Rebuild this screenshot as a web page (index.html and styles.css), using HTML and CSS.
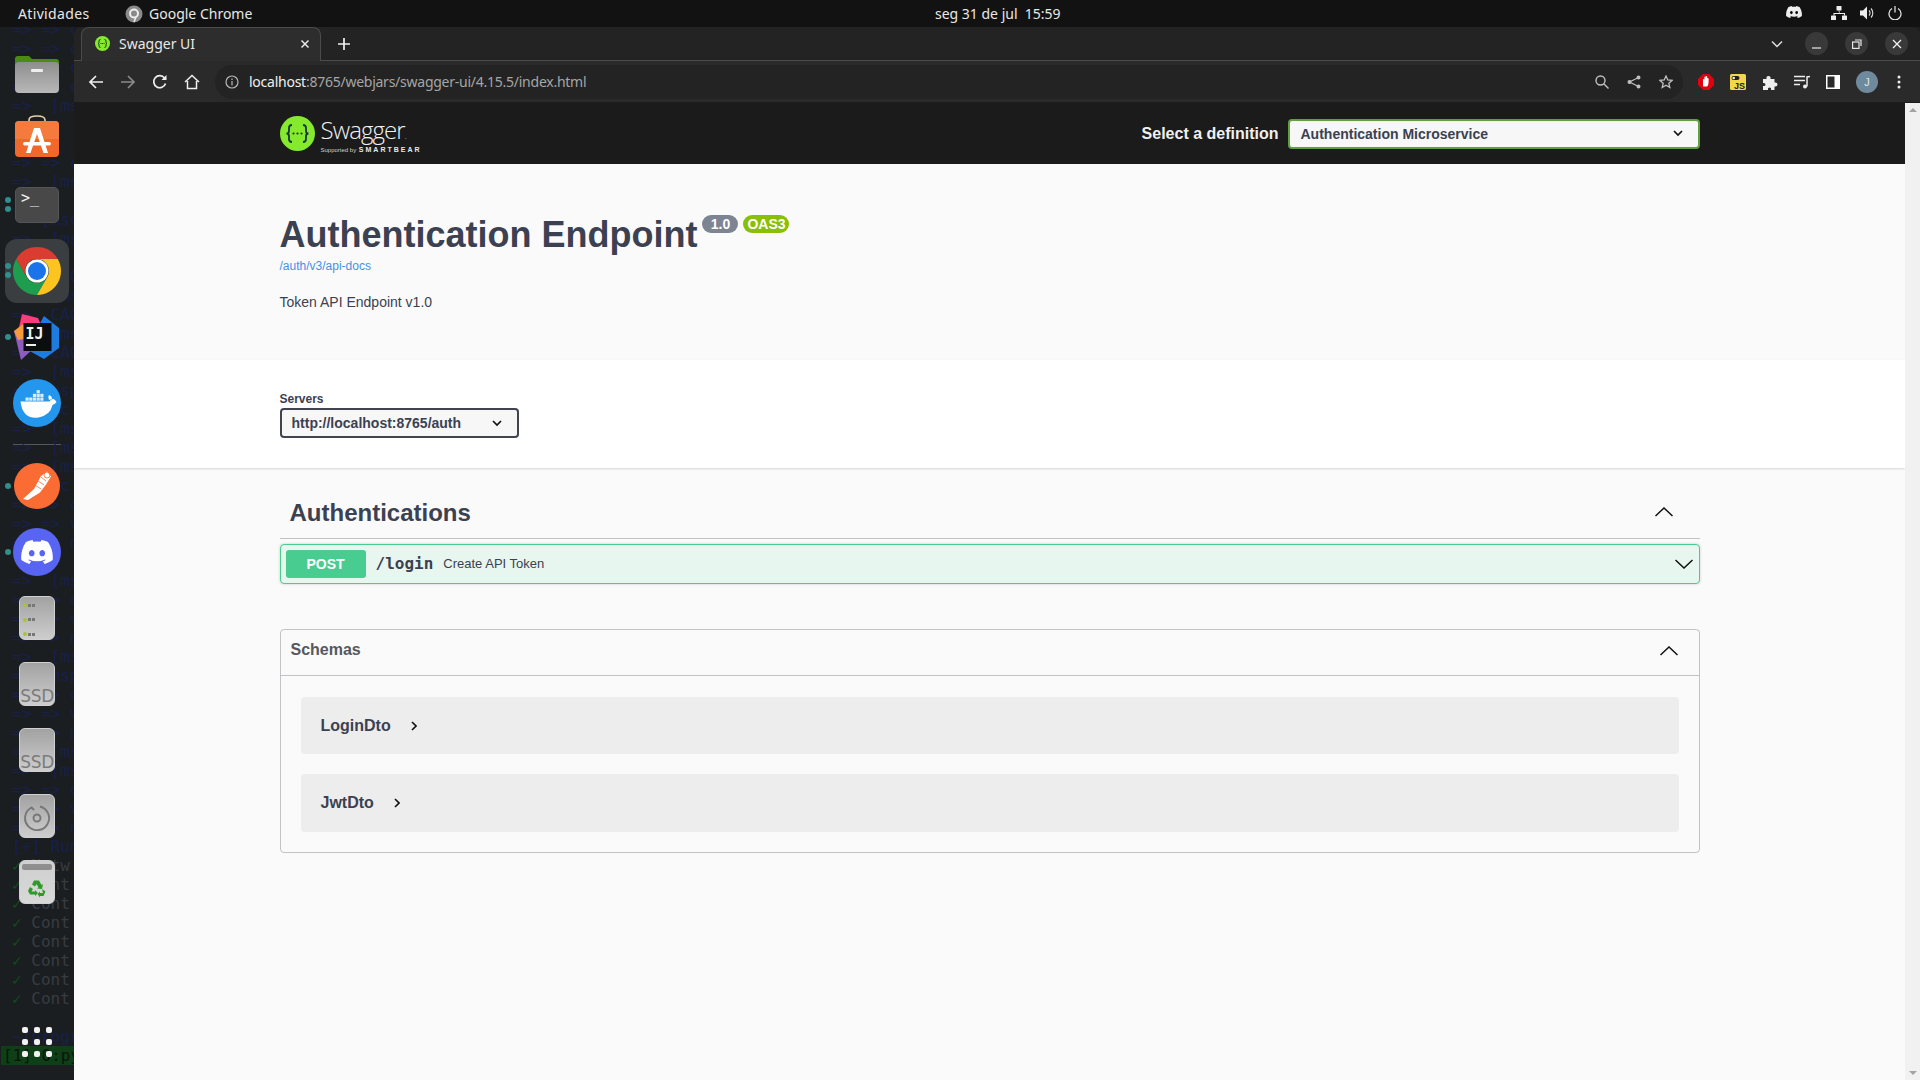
FILE: index.html
```html
<!DOCTYPE html>
<html>
<head>
    <title>Swagger UI</title>
    <link rel="stylesheet" href="styles.css">
</head>
<body>
    <svg class="defs" width="0" height="0">
        <symbol id="discord" viewBox="0 0 127.14 96.36">
            <path d="M107.7,8.07A105.15,105.15,0,0,0,81.47,0a72.06,72.06,0,0,0-3.36,6.83A97.68,97.68,0,0,0,49,6.83,72.37,72.37,0,0,0,45.64,0,105.89,105.89,0,0,0,19.39,8.09C2.79,32.65-1.71,56.6.54,80.21h0A105.73,105.73,0,0,0,32.71,96.36,77.7,77.7,0,0,0,39.6,85.25a68.42,68.42,0,0,1-10.85-5.18c.91-.66,1.8-1.34,2.66-2a75.57,75.57,0,0,0,64.32,0c.87.71,1.76,1.39,2.66,2a68.68,68.68,0,0,1-10.87,5.19,77,77,0,0,0,6.89,11.1A105.25,105.25,0,0,0,126.6,80.22h0C129.24,52.84,122.09,29.11,107.7,8.07ZM42.45,65.69C36.18,65.69,31,60,31,53s5-12.74,11.43-12.74S54,46,53.89,53,48.84,65.69,42.45,65.69Zm42.24,0C78.41,65.69,73.25,60,73.25,53s5-12.74,11.44-12.74S96.23,46,96.12,53,91.08,65.69,84.69,65.69Z"/>
        </symbol>
    </svg>

    <div class="topbar">
        <span class="activities">Atividades</span>
        <svg class="app-icon" width="18" height="18" viewBox="0 0 18 18"><circle cx="9" cy="9" r="8.5" fill="#8a8a8a"/><circle cx="9" cy="8.5" r="4" fill="none" stroke="#eee" stroke-width="2"/><path d="M11 12l-2 5" stroke="#eee" stroke-width="1.5"/></svg>
        <span class="app-name">Google Chrome</span>
        <span class="clock">seg 31 de jul&nbsp; 15:59</span>
        <div class="tray">
            <svg class="tray-discord" width="16" height="12"><use href="#discord" fill="#eee"/></svg>
            <svg class="tray-net" width="16" height="14" viewBox="0 0 16 14" fill="#eee"><rect x="5.5" y="0" width="5" height="4.5" rx=".6"/><rect x="0" y="9.5" width="5" height="4.5" rx=".6"/><rect x="11" y="9.5" width="5" height="4.5" rx=".6"/><path d="M7.5 4.5h1v2.5h5.5v2.5h-1v-1.5h-9.5v1.5h-1v-2.5h5.5z"/></svg>
            <svg class="tray-vol" width="15" height="14" viewBox="0 0 15 14"><path d="M0 4.5h3l4-4v13l-4-4h-3z" fill="#eee"/><path d="M9 4.5a3.5 3.5 0 0 1 0 5M11 2.5a6.5 6.5 0 0 1 0 9" fill="none" stroke="#ddd" stroke-width="1.1"/></svg>
            <svg class="tray-power" width="14" height="14" viewBox="0 0 14 14" fill="none" stroke="#eee" stroke-width="1.2"><path d="M4 2.6a6 6 0 1 0 6 0"/><path d="M7 0v6.5"/></svg>
        </div>
    </div>

    <div class="desktop">
        <div class="dock">
            <pre class="term"><span class="t">=&gt; =&gt; c
=&gt; =&gt; c
   =&gt; c
=&gt; =&gt; c
=&gt;  [msa

=&gt; sc
=&gt; =&gt; c
=&gt;  [msp

   [msc
=&gt;  [ms
=&gt;  ms
=&gt;  CACH
=&gt;  [ms
=&gt;  CACH
=&gt;  [msp
=&gt;  CACH
=&gt;  [ms
=&gt;  msp
=&gt;  sc
=&gt;  [ms
=&gt;  [ms
=&gt;  [ms
    sc
=&gt; =&gt; c
=&gt; =&gt; v
=&gt; =&gt; n
  sa
=&gt;  [ms
=&gt; =&gt; c
=&gt; =&gt; v
=&gt; =&gt; n
=&gt;  [msp
=&gt;  msp
=&gt; =&gt; c
=&gt; =&gt; v
=&gt; =&gt; n
=&gt;  [msc
=&gt;  [ms
=&gt; =&gt; c
=&gt; =&gt; v
=&gt; =&gt; n
[+] Runn</span>
<span class="t-ok">✓</span> <span class="t-dim">Netw</span>
<span class="t-ok">✓</span> <span class="t-dim">Cont</span>
<span class="t-ok">✓</span> <span class="t-dim">Cont</span>
<span class="t-ok">✓</span> <span class="t-dim">Cont</span>
<span class="t-ok">✓</span> <span class="t-dim">Cont</span>
<span class="t-ok">✓</span> <span class="t-dim">Cont</span>
<span class="t-ok">✓</span> <span class="t-dim">Cont</span>
<span class="t-ok">✓</span> <span class="t-dim">Cont</span>

<span class="t">~/progra</span>
<span class="t-status">[1] 0:py</span></pre>

            <div class="dock-item">
                <svg width="44" height="40" viewBox="0 0 44 40"><path d="M0 6q0-3 3-3h11l3 3h24q3 0 3 3v10h-44z" fill="#4c8b12"/><rect y="9" width="44" height="31" rx="4" fill="url(#gFile)"/><rect x="16" y="16" width="12" height="3" rx="1" fill="#eee"/><defs><linearGradient id="gFile" x2="0" y2="1"><stop offset="0" stop-color="#8e8e8e"/><stop offset="1" stop-color="#b8b8b8"/></linearGradient></defs></svg>
            </div>
            <div class="dock-item">
                <svg class="bag" width="44" height="42" viewBox="0 0 44 42"><path d="M14 8v-3q0-4 8-4t8 4v3" fill="none" stroke="#e8cfa8" stroke-width="1.6"/><rect y="6" width="44" height="36" rx="4" fill="#f2672a"/><path d="M0 24V10q0-4 4-4h36q4 0 4 4v14z" fill="#f57a3d"/><path d="M19 13h6l8 25h-4.500L22 19l-6.500 19H11z" fill="#fff"/><rect x="8" y="27" width="28" height="3.400" rx="1.700" fill="#fff"/></svg>
            </div>
            <div class="dock-item">
                <span class="run run-2"></span>
                <div class="tile-term">&gt;_</div>
            </div>
            <div class="dock-item dock-active">
                <span class="run run-2"></span>
                <svg width="48" height="48" viewBox="0 0 48 48"><path d="M24 0A24 24 0 0 1 44.780 12H24A12 12 0 0 0 13.600 30L3.220 12A24 24 0 0 1 24 0z" fill="#db3c31"/><path d="M3.220 12L13.600 30A12 12 0 0 0 34.400 30L24 48A24 24 0 0 1 3.220 12z" fill="#1f9d4f"/><path d="M44.780 12A24 24 0 0 1 24 48L34.400 30A12 12 0 0 0 24 12H44.780z" fill="#fcc41f"/><circle cx="24" cy="24" r="11.500" fill="#fff"/><circle cx="24" cy="24" r="9" fill="#1a73e8"/></svg>
            </div>
            <div class="dock-item">
                <span class="run"></span>
                <svg width="46" height="46" viewBox="0 0 46 46"><path d="M8 0l16 4 6 14-16 8-10-8z" fill="#fb3d7e"/><path d="M0 17l14-5 6 22-13 12z" fill="#8d5cc0"/><path d="M0 17l9-7 5 14-10 2z" fill="#f79a3c"/><path d="M30 2l15 12v20l-15 11-18-10z" fill="#1e7be0"/><rect x="9.500" y="9" width="28" height="28" fill="#0c0d10"/><rect x="12" y="30" width="10" height="2" fill="#eee"/><text class="ij" x="11.500" y="25">IJ</text></svg>
            </div>
            <div class="dock-item">
                <svg width="48" height="48" viewBox="0 0 48 48"><circle cx="24" cy="24" r="24" fill="#2396ed"/><path d="M7.500 22.500h29q1.500-3 4-2.500 2 1 3 3-1 2-4 3-2 10-14 12.500-16 2-18-16z" fill="#fff"/><path d="M36 21q-1.500-3 0-5 3 1 3 4z" fill="#fff"/><g fill="#d8ecfc"><rect x="12.500" y="18.500" width="3.200" height="3.200"/><rect x="16.200" y="18.500" width="3.200" height="3.200"/><rect x="19.900" y="18.500" width="3.200" height="3.200"/><rect x="23.600" y="18.500" width="3.200" height="3.200"/><rect x="27.300" y="18.500" width="3.200" height="3.200"/><rect x="19.900" y="14.800" width="3.200" height="3.200"/><rect x="23.600" y="14.800" width="3.200" height="3.200"/><rect x="27.300" y="14.800" width="3.200" height="3.200"/><rect x="23.600" y="11.100" width="3.200" height="3.200"/></g></svg>
            </div>
            <div class="dock-sep"></div>
            <div class="dock-item">
                <span class="run"></span>
                <svg width="46" height="46" viewBox="0 0 46 46"><circle cx="23" cy="23" r="23" fill="#fb6b34"/><path d="M9 36l11-10 7-13 6-4.500 4 5-5 8-6 8-12 7.500z" fill="#fff"/><path d="M21 22l6 4M24 18l6 4M27 14l5 4" stroke="#fb6b34" stroke-width=".8"/><circle cx="33" cy="12" r="3" fill="none" stroke="#fb6b34" stroke-width=".8"/></svg>
            </div>
            <div class="dock-item">
                <span class="run"></span>
                <div class="disc-circle"><svg width="32" height="24"><use href="#discord" fill="#fff"/></svg></div>
            </div>
            <div class="dock-item">
                <div class="tile tile-server">
                    <div class="srv-row"><i></i><b></b><b></b></div>
                    <div class="srv-row"><i></i><b></b><b></b></div>
                    <div class="srv-row"><i></i><b></b><b></b></div>
                </div>
            </div>
            <div class="dock-item"><div class="tile tile-ssd">SSD</div></div>
            <div class="dock-item"><div class="tile tile-ssd">SSD</div></div>
            <div class="dock-item">
                <div class="tile tile-center">
                    <svg width="28" height="28" viewBox="0 0 28 28" fill="none" stroke="#777" stroke-width="1.900"><path d="M17 2.500a12 12 0 1 1-8.500 1"/><path d="M8 3l3 3"/><circle cx="14" cy="14" r="3.500"/></svg>
                </div>
            </div>
            <div class="dock-item">
                <div class="tile tile-trash">
                    <div class="trash-lid"></div>
                    <svg width="20" height="20" viewBox="0 0 20 20" fill="#2d9a2a"><path d="M7 1.500h5l2.500 4.500 1.500-1-1 5-5-.5 1.500-1-2-3.500-1.500 2.500-3-2z"/><path d="M3 8l3 2-1.500 2.500h3.500v-1.500l3 3-3 3v-1.500h-5l-2-3.500z"/><path d="M15 10l3.500 2.500-2 4.500h-3.500v1.500l-2.500-3.500 2.500-2.500v1.500h3z"/></svg>
                </div>
            </div>
            <div class="dock-grid">
                <i></i><i></i><i></i><i></i><i></i><i></i><i></i><i></i><i></i>
            </div>
        </div>

        <div class="window">
            <div class="tabstrip">
                <div class="tab">
                    <svg class="favicon" width="15" height="15" viewBox="0 0 15 15"><circle cx="7.500" cy="7.500" r="7.500" fill="#85ea2d"/><path d="M5.500 3.500q-1.500 0-1.500 1.500v1.500q0 1-1 1 1 0 1 1v1.500q0 1.500 1.500 1.500M9.500 3.500q1.500 0 1.500 1.500v1.500q0 1 1 1-1 0-1 1v1.500q0 1.500-1.500 1.500" fill="none" stroke="#173647" stroke-width="1"/><path d="M5.500 7.500h4" stroke="#173647" stroke-width="1" stroke-dasharray="1 .6"/></svg>
                    <span class="tab-title">Swagger UI</span>
                    <svg class="tab-close" width="10" height="10" viewBox="0 0 10 10" stroke="#e8e8e8" stroke-width="1.500"><path d="M1.500 1.500l7 7M8.500 1.500l-7 7"/></svg>
                </div>
                <svg class="tab-new" width="12" height="12" viewBox="0 0 12 12" stroke="#f0f0f0" stroke-width="1.700"><path d="M6 0v12M0 6h12"/></svg>
                <svg class="tab-list" width="12" height="8" viewBox="0 0 12 8" fill="none" stroke="#e0e0e0" stroke-width="1.500"><path d="M1 1.500l5 5 5-5"/></svg>
                <div class="win-btn"><svg width="10" height="10" viewBox="0 0 10 10" stroke="#e8e8e8" stroke-width="1.200"><path d="M0 9h9"/></svg></div>
                <div class="win-btn"><svg width="10" height="10" viewBox="0 0 10 10" fill="none" stroke="#e8e8e8" stroke-width="1.200"><rect x=".6" y="3" width="6.400" height="6.400"/><path d="M3 1h6v6"/></svg></div>
                <div class="win-btn"><svg width="10" height="10" viewBox="0 0 10 10" stroke="#f0f0f0" stroke-width="1.300"><path d="M1 1l8 8M9 1l-8 8"/></svg></div>
            </div>

            <div class="toolbar">
                <svg class="nav" width="16" height="16" viewBox="0 0 16 16" fill="none" stroke="#f0f0f0" stroke-width="1.700"><path d="M15 8H2M8 2L2 8l6 6"/></svg>
                <svg class="nav" width="16" height="16" viewBox="0 0 16 16" fill="none" stroke="#8a8a8a" stroke-width="1.700"><path d="M1 8h13M8 2l6 6-6 6"/></svg>
                <svg class="nav" width="16" height="16" viewBox="0 0 16 16" fill="none" stroke="#f0f0f0" stroke-width="1.700"><path d="M13.500 9.500A6 6 0 1 1 12.500 4"/><path d="M14.500 1v5h-5z" fill="#f0f0f0" stroke="none"/></svg>
                <svg class="nav" width="16" height="16" viewBox="0 0 16 16" fill="none" stroke="#f0f0f0" stroke-width="1.500"><path d="M1 8l7-6.500L15 8M3.500 7v7.500h9V7"/></svg>
                <div class="omnibox">
                    <svg class="info-icon" width="14" height="14" viewBox="0 0 14 14" fill="none" stroke="#b8b8b8" stroke-width="1.200"><circle cx="7" cy="7" r="6"/><path d="M7 6v4.500M7 3.500v1.500"/></svg>
                    <span class="url"><b>localhost</b>:8765/webjars/swagger-ui/4.15.5/index.html</span>
                    <svg class="omni-btn" width="14" height="14" viewBox="0 0 14 14" fill="none" stroke="#c0c0c0" stroke-width="1.400"><circle cx="5.500" cy="5.500" r="4.500"/><path d="M9 9l4.500 4.500"/></svg>
                    <svg class="omni-btn" width="14" height="14" viewBox="0 0 14 14" fill="#c0c0c0" stroke="#c0c0c0" stroke-width="1.200"><path d="M11.500 2.500l-9 4.500 9 4.500" fill="none"/><circle cx="11.500" cy="2.500" r="1.400"/><circle cx="2.500" cy="7" r="1.400"/><circle cx="11.500" cy="11.500" r="1.400"/></svg>
                    <svg class="omni-btn" width="14" height="14" viewBox="0 0 14 14" fill="none" stroke="#c0c0c0" stroke-width="1.300"><path d="M7 1l1.800 4 4.200.4-3.200 2.800 1 4.300L7 10.200 3.200 12.500l1-4.300L1 5.400 5.200 5z"/></svg>
                </div>
                <div class="ext-icons">
                    <svg width="16" height="16" viewBox="0 0 16 16"><path d="M5 0h6l5 5v6l-5 5H5l-5-5V5z" fill="#e2000f"/><path d="M5 12.500V6q0-1 .7-1t.7 1V3.500q0-1 .7-1t.7 1V3q0-1 .7-1t.7 1v2q0-1 .7-1t.7 1v3q0 3-1.500 4.500z" fill="#fff"/></svg>
                    <svg width="16" height="16" viewBox="0 0 16 16"><rect width="16" height="16" rx="1.500" fill="#f2d74a"/><rect x="1.500" y="2" width="8" height="4" rx="2" fill="#222"/><circle cx="3.700" cy="4" r="1.300" fill="#eee"/><text class="js" x="4" y="14.500">JS</text></svg>
                    <svg width="16" height="16" viewBox="0 0 16 16" fill="#eee"><path d="M1 5h3.500q-.5-3 2-3t2 3h4v3.500q3-.5 3 2t-3 2V16H9q.5-2.500-1.500-2.500T6 16H1v-4q2.500.5 2.500-1.500T1 9z"/></svg>
                    <svg width="16" height="14" viewBox="0 0 16 14" fill="none" stroke="#eee" stroke-width="1.500"><path d="M0 1.500h11M0 5.500h11M0 9.500h6"/><path d="M13 11.500V2l3-.5"/><circle cx="11" cy="11.500" r="2" fill="#eee" stroke="none"/></svg>
                    <svg width="14" height="14" viewBox="0 0 14 14"><rect width="14" height="14" fill="#fff"/><rect x="1.500" y="1.500" width="7" height="11" fill="#2a2a2a"/></svg>
                    <div class="avatar">J</div>
                    <svg class="menu-dots" width="4" height="14" viewBox="0 0 4 14" fill="#eee"><circle cx="2" cy="2" r="1.500"/><circle cx="2" cy="7" r="1.500"/><circle cx="2" cy="12" r="1.500"/></svg>
                </div>
            </div>

            <div class="viewport">
                <div class="page">
                    <div class="swagger-top">
                        <div class="wrapper top-inner">
                            <div class="logo">
                                <svg width="35" height="35" viewBox="0 0 35 35"><circle cx="17.500" cy="17.500" r="17.500" fill="#85ea2d"/><path d="M12 9q-3 0-3 3v3q0 2.500-2.500 2.500 2.500 0 2.500 2.500v3q0 3 3 3M23 9q3 0 3 3v3q0 2.500 2.500 2.500-2.500 0-2.500 2.500v3q0 3-3 3" fill="none" stroke="#173647" stroke-width="1.800"/><g fill="#173647"><circle cx="13.500" cy="17.500" r="1.100"/><circle cx="17.500" cy="17.500" r="1.100"/><circle cx="21.500" cy="17.500" r="1.100"/></g></svg>
                                <div class="logo-text">
                                    <div class="logo-name">Swagger<small>.</small></div>
                                    <div class="logo-sub">Supported by <b>SMARTBEAR</b></div>
                                </div>
                            </div>
                            <label class="def-label">Select a definition</label>
                            <div class="def-select">
                                <span>Authentication Microservice</span>
                                <svg class="sel-arrow" width="10" height="7" viewBox="0 0 10 7" fill="none" stroke="#111" stroke-width="1.700"><path d="M1 1l4 4 4-4"/></svg>
                            </div>
                        </div>
                    </div>

                    <div class="wrapper info">
                        <h2 class="title">Authentication Endpoint <span class="badge badge-ver">1.0</span> <span class="badge badge-oas">OAS3</span></h2>
                        <a class="spec-link" href="#">/auth/v3/api-docs</a>
                        <p class="desc">Token API Endpoint v1.0</p>
                    </div>

                    <div class="schemes">
                        <div class="wrapper">
                            <div class="schemes-label">Servers</div>
                            <div class="server-select">
                                <span>http://localhost:8765/auth</span>
                                <svg class="sel-arrow" width="10" height="7" viewBox="0 0 10 7" fill="none" stroke="#111" stroke-width="1.700"><path d="M1 1l4 4 4-4"/></svg>
                            </div>
                        </div>
                    </div>

                    <div class="wrapper ops">
                        <h3 class="tag">
                            <span>Authentications</span>
                            <svg class="chev-tag" width="18" height="10" viewBox="0 0 18 10" fill="none" stroke="#111" stroke-width="1.500"><path d="M.5 9L9 1l8.500 8"/></svg>
                        </h3>
                        <div class="opblock">
                            <span class="method">POST</span>
                            <span class="path">/login</span>
                            <span class="summary">Create API Token</span>
                            <svg class="chev-op" width="18" height="10" viewBox="0 0 18 10" fill="none" stroke="#111" stroke-width="1.500"><path d="M.5 1L9 9l8.500-8"/></svg>
                        </div>

                        <div class="models">
                            <h4 class="models-head">
                                <span>Schemas</span>
                                <svg class="chev-models" width="18" height="10" viewBox="0 0 18 10" fill="none" stroke="#111" stroke-width="1.500"><path d="M.5 9L9 1l8.500 8"/></svg>
                            </h4>
                            <div class="models-body">
                                <div class="model"><span>LoginDto</span><svg width="6" height="10" viewBox="0 0 6 10" fill="none" stroke="#111" stroke-width="1.600"><path d="M1 1l4 4-4 4"/></svg></div>
                                <div class="model"><span>JwtDto</span><svg width="6" height="10" viewBox="0 0 6 10" fill="none" stroke="#111" stroke-width="1.600"><path d="M1 1l4 4-4 4"/></svg></div>
                            </div>
                        </div>
                    </div>
                </div>
                <div class="scrollbar">
                    <span class="sb-up"></span>
                    <span class="sb-down"></span>
                </div>
            </div>
        </div>
    </div>
</body>
</html>
```

FILE: styles.css
```css
html, body {
    margin: 0;
    height: 100%;
    overflow: hidden;
}
body {
    display: flex;
    flex-direction: column;
    font-family: "Liberation Sans", Arial, sans-serif;
    background-color: #1b1e20;
    color: #3b4151;
}
.defs {
    position: absolute;
}

/* desktop top bar */
.topbar {
    height: 27px;
    flex: none;
    display: flex;
    align-items: center;
    position: relative;
    background-color: #121212;
    color: #e8e8e8;
    font-family: "Noto Sans", sans-serif;
    font-size: 14px;
    padding-left: 18px;
}
.activities {
    width: 107px;
    letter-spacing: 0.35px;
}
.app-icon {
    margin-right: 6px;
}
.clock {
    position: absolute;
    left: 935px;
    top: 4px;
    line-height: 19px;
}
.tray {
    position: absolute;
    top: 0;
    left: 0;
    width: 100%;
    height: 27px;
}
.tray svg {
    position: absolute;
    top: 6px;
}
.tray-discord { left: 1786px; }
.tray-net { left: 1831px; }
.tray-vol { left: 1860px; }
.tray-power { left: 1888px; }

.desktop {
    flex: 1;
    display: flex;
    min-height: 0;
}

/* dock */
.dock {
    width: 74px;
    flex: none;
    display: flex;
    flex-direction: column;
    position: relative;
    padding-top: 13px;
    box-sizing: border-box;
    overflow: hidden;
}
.term {
    position: absolute;
    left: 12px;
    top: -7px;
    margin: 0;
    width: 62px;
    font-family: "DejaVu Sans Mono", monospace;
    font-size: 16px;
    line-height: 19px;
    color: #18204a;
}
.t-ok { color: #114a1c; }
.t-dim { color: #383c40; }
.t-status {
    display: inline-block;
    width: 73px;
    margin-left: -11px;
    padding-left: 2px;
    box-sizing: border-box;
    background-color: #0e3f16;
    color: #0a160c;
}
.dock-item {
    height: 66px;
    flex: none;
    display: flex;
    align-items: center;
    justify-content: center;
    position: relative;
}
.dock-active::before {
    content: "";
    position: absolute;
    left: 5px;
    top: 1px;
    width: 64px;
    height: 64px;
    border-radius: 12px;
    background-color: #3b3e40;
}
.dock-item > * {
    position: relative;
}
.bag {
    margin-top: -7px;
}
.run {
    position: absolute !important;
    left: 5px;
    top: 30px;
    width: 6px;
    height: 6px;
    border-radius: 50%;
    background-color: #2f8f8c;
}
.run-2 {
    top: 25px;
    box-shadow: 0 9px 0 #2f8f8c;
}
.dock-sep {
    flex: none;
    height: 1px;
    margin: 8px 13px;
    background-color: #55585a;
}
.tile-term {
    width: 44px;
    height: 36px;
    border-radius: 5px;
    background-color: #484848;
    border: 1px solid #555;
    box-sizing: border-box;
    padding-left: 5px;
    color: #f2f2f2;
    font-family: "DejaVu Sans Mono", monospace;
    font-size: 15px;
    line-height: 20px;
}
.disc-circle {
    width: 48px;
    height: 48px;
    border-radius: 50%;
    background-color: #5865f2;
    display: flex;
    align-items: center;
    justify-content: center;
}
.tile {
    width: 36px;
    height: 44px;
    box-sizing: border-box;
    border-radius: 6px;
    border: 1px solid #d0d0d0;
    background: linear-gradient(#a2a2a2, #cdcdcd);
}
.tile-server {
    padding: 6px 3px;
    display: flex;
    flex-direction: column;
    gap: 10.5px;
}
.srv-row {
    display: flex;
    gap: 1px;
    height: 4px;
    align-items: center;
}
.srv-row i {
    width: 4px;
    height: 4px;
    border-radius: 50%;
    background-color: #a8c23c;
}
.srv-row b {
    width: 3px;
    height: 3px;
    background-color: #777;
}
.tile-ssd {
    font-size: 17px;
    color: #7b7b7b;
    text-align: right;
    padding: 23px 0 0;
    line-height: 20px;
    white-space: nowrap;
    font-family: "DejaVu Sans", sans-serif;
    letter-spacing: -0.3px;
}
.tile-center {
    display: flex;
    justify-content: center;
    padding-top: 9px;
}
.tile-trash {
    background: linear-gradient(#cfcfcf, #d8d8d8);
    display: flex;
    flex-direction: column;
    align-items: center;
    padding-top: 3px;
    gap: 9px;
}
.trash-lid {
    width: 30px;
    height: 6px;
    border-radius: 2px;
    background-color: #8f8f8f;
}
.dock-grid {
    position: absolute;
    left: 22px;
    top: 1000px;
    display: grid;
    grid-template-columns: repeat(3, 6px);
    gap: 6px;
}
.dock-grid i {
    width: 6px;
    height: 6px;
    border-radius: 2px;
    background-color: #f2f2f2;
}
.ij {
    font-family: "DejaVu Sans Mono", monospace;
    font-weight: bold;
    font-size: 15px;
    fill: #f2f2f2;
}
.js {
    font-family: "Liberation Sans", sans-serif;
    font-weight: bold;
    font-size: 9px;
    fill: #222;
}

/* browser window */
.window {
    flex: 1;
    min-width: 0;
    display: flex;
    flex-direction: column;
}
.tabstrip {
    height: 33px;
    flex: none;
    box-sizing: content-box;
    display: flex;
    align-items: center;
    background-color: #232323;
    border-bottom: 1px solid #4b4b4b;
    border-radius: 8px 8px 0 0;
    padding-left: 7px;
    color: #e8e8e8;
}
.tab {
    width: 240px;
    height: 34px;
    box-sizing: border-box;
    margin-bottom: -1px;
    display: flex;
    align-items: center;
    background-color: #2d2d2d;
    border: 1px solid #4b4b4b;
    border-bottom: none;
    border-radius: 8px 8px 0 0;
    padding: 0 0 2px 13px;
    font-family: "Noto Sans", sans-serif;
    font-size: 14px;
}
.favicon {
    margin-right: 9px;
}
.tab-title {
    flex: 1;
}
.tab-close {
    margin-right: 10px;
}
.tab-new {
    margin-left: 17px;
}
.tab-list {
    margin-left: auto;
    margin-right: 22px;
}
.win-btn {
    width: 23px;
    height: 23px;
    border-radius: 50%;
    background-color: #393939;
    display: flex;
    align-items: center;
    justify-content: center;
    margin-right: 17px;
}
.win-btn:last-child {
    margin-right: 12px;
}
.toolbar {
    height: 41px;
    flex: none;
    display: flex;
    align-items: center;
    background-color: #2a2a2a;
    border-bottom: 1px solid #1d1d1d;
    padding-left: 14px;
}
.nav {
    margin-right: 16px;
    flex: none;
}
.nav:nth-of-type(4) {
    margin-right: 15px;
}
.omnibox {
    width: 1468px;
    height: 34px;
    flex: none;
    display: flex;
    align-items: center;
    background-color: #232323;
    border-radius: 17px;
    padding: 0 10px;
    box-sizing: border-box;
}
.info-icon {
    margin-right: 10px;
    flex: none;
}
.url {
    flex: 1;
    font-family: "Noto Sans", sans-serif;
    font-size: 14px;
    color: #a6a6a6;
    letter-spacing: -0.25px;
}
.url b {
    font-weight: normal;
    color: #f0f0f0;
}
.omni-btn {
    margin-left: 18px;
    flex: none;
}
.ext-icons {
    flex: 1;
    display: flex;
    align-items: center;
    padding-left: 15px;
    gap: 16px;
}
.avatar {
    width: 22px;
    height: 22px;
    border-radius: 50%;
    background-color: #6e8a9c;
    color: #dfe6ea;
    font-size: 11px;
    line-height: 22px;
    text-align: center;
}
.menu-dots {
    margin-left: 3px;
}

/* page inside the window */
.viewport {
    flex: 1;
    display: flex;
    min-height: 0;
}
.page {
    flex: 1;
    min-width: 0;
    background-color: #fafafa;
}
.scrollbar {
    width: 15px;
    flex: none;
    display: flex;
    flex-direction: column;
    justify-content: space-between;
    align-items: center;
    background-color: #f1f1f1;
    padding: 5px 0;
    box-sizing: border-box;
}
.sb-up {
    border-left: 4px solid transparent;
    border-right: 4px solid transparent;
    border-bottom: 4px solid #a3a3a3;
}
.sb-down {
    border-left: 4px solid transparent;
    border-right: 4px solid transparent;
    border-top: 4px solid #a3a3a3;
}
.wrapper {
    box-sizing: border-box;
    max-width: 1460px;
    margin: 0 auto;
    padding: 0 20px;
}

.swagger-top {
    height: 61px;
    background-color: #1b1b1b;
    display: flex;
    align-items: center;
}
.top-inner {
    flex: 1;
    display: flex;
    align-items: center;
}
.logo {
    display: flex;
    align-items: center;
    margin-right: auto;
    color: #f2f2f2;
}
.logo-text {
    margin-left: 6px;
    margin-top: 4px;
}
.logo-name {
    font-family: "Open Sans", sans-serif;
    font-weight: 300;
    font-size: 24px;
    line-height: 26px;
    letter-spacing: -0.9px;
    margin-bottom: -3px;
}
.logo-name small {
    font-size: 8px;
}
.logo-sub {
    font-size: 6px;
    line-height: 8px;
    color: #cfcfcf;
    white-space: nowrap;
}
.logo-sub b {
    font-size: 7px;
    letter-spacing: 2px;
    color: #e8e8e8;
    margin-left: 1px;
}
.def-label {
    font-size: 16px;
    font-weight: bold;
    color: #f0f0f0;
    margin-right: 9px;
}
.def-select {
    width: 412px;
    height: 30px;
    box-sizing: border-box;
    border: 2px solid #62a03f;
    border-radius: 4px;
    background-color: #f7f7f7;
    padding: 0 10px 0 11px;
    display: flex;
    align-items: center;
    justify-content: space-between;
    font-size: 14px;
    font-weight: bold;
    color: #3b4151;
}
.sel-arrow {
    margin-right: 5px;
}

.info {
    padding-top: 48px;
    height: 196px;
}
.title {
    margin: 0;
    font-size: 36px;
    line-height: 45px;
    font-weight: bold;
    color: #3b4151;
}
.badge {
    display: inline-block;
    vertical-align: 18px;
    margin-left: -5px;
    margin-right: 0;
    height: 18px;
    line-height: 18px;
    padding: 0 4px;
    border-radius: 57px;
    color: #fff;
    font-size: 14px;
    font-weight: bold;
}
.badge-ver {
    width: 36px;
    box-sizing: border-box;
    text-align: center;
    background-color: #7d8492;
}
.badge-oas {
    width: 46px;
    box-sizing: border-box;
    text-align: center;
    padding: 0;
    background-color: #89bf04;
}
.spec-link {
    display: block;
    margin-top: 2px;
    font-size: 12px;
    line-height: 15px;
    color: #4990e2;
    text-decoration: none;
}
.desc {
    margin: 19px 0 0;
    font-size: 14px;
    line-height: 18px;
}

.schemes {
    height: 108px;
    box-sizing: border-box;
    padding-top: 31px;
    background-color: #fff;
    box-shadow: 0 1px 2px rgba(0, 0, 0, 0.15);
}
.schemes-label {
    font-size: 12px;
    font-weight: bold;
    line-height: 17px;
}
.server-select {
    width: 239px;
    height: 30px;
    box-sizing: border-box;
    border: 2px solid #41444e;
    border-radius: 4px;
    background-color: #f7f7f7;
    padding: 0 10px;
    display: flex;
    align-items: center;
    justify-content: space-between;
    font-size: 14px;
    font-weight: bold;
}
.server-select .sel-arrow {
    margin-right: 5px;
}

.ops {
    padding-top: 20px;
}
.tag {
    margin: 0 0 5px;
    height: 51px;
    box-sizing: border-box;
    display: flex;
    align-items: center;
    justify-content: space-between;
    padding: 0 27px 1px 10px;
    border-bottom: 1px solid rgba(59, 65, 81, 0.3);
    font-size: 24px;
    font-weight: bold;
}
.chev-tag {
    margin-top: -1px;
}
.opblock {
    height: 40px;
    box-sizing: border-box;
    display: flex;
    align-items: center;
    padding: 0 6px 0 5px;
    border: 1px solid #49cc90;
    border-radius: 4px;
    background-color: #e8f6f0;
    box-shadow: 0 0 3px rgba(0, 0, 0, 0.19);
}
.method {
    width: 80px;
    height: 28px;
    line-height: 28px;
    text-align: center;
    border-radius: 3px;
    background-color: #49cc90;
    color: #fff;
    font-size: 14px;
    font-weight: bold;
}
.path {
    margin: -2px 0 0 10px;
    font-family: "DejaVu Sans Mono", monospace;
    font-size: 16px;
    font-weight: bold;
}
.summary {
    margin: -2px 0 0 10px;
    font-size: 13px;
    flex: 1;
}
.models {
    margin-top: 45px;
    border: 1px solid rgba(59, 65, 81, 0.3);
    border-radius: 4px;
}
.models-head {
    margin: 0;
    height: 46px;
    box-sizing: border-box;
    display: flex;
    align-items: center;
    justify-content: space-between;
    padding: 0 21px 0 10px;
    border-bottom: 1px solid rgba(59, 65, 81, 0.3);
    font-size: 16px;
    font-weight: bold;
    color: #55585f;
}
.models-head span {
    margin-top: -6px;
}
.chev-models {
    margin-top: -4px;
}
.models-body {
    padding: 21px 20px 20px;
    display: flex;
    flex-direction: column;
    gap: 20px;
}
.model {
    height: 58px;
    display: flex;
    align-items: center;
    gap: 20px;
    padding-left: 20px;
    border-radius: 4px;
    background-color: #ededed;
    font-size: 16px;
    font-weight: bold;
}
.model:first-child {
    height: 57px;
}
```
